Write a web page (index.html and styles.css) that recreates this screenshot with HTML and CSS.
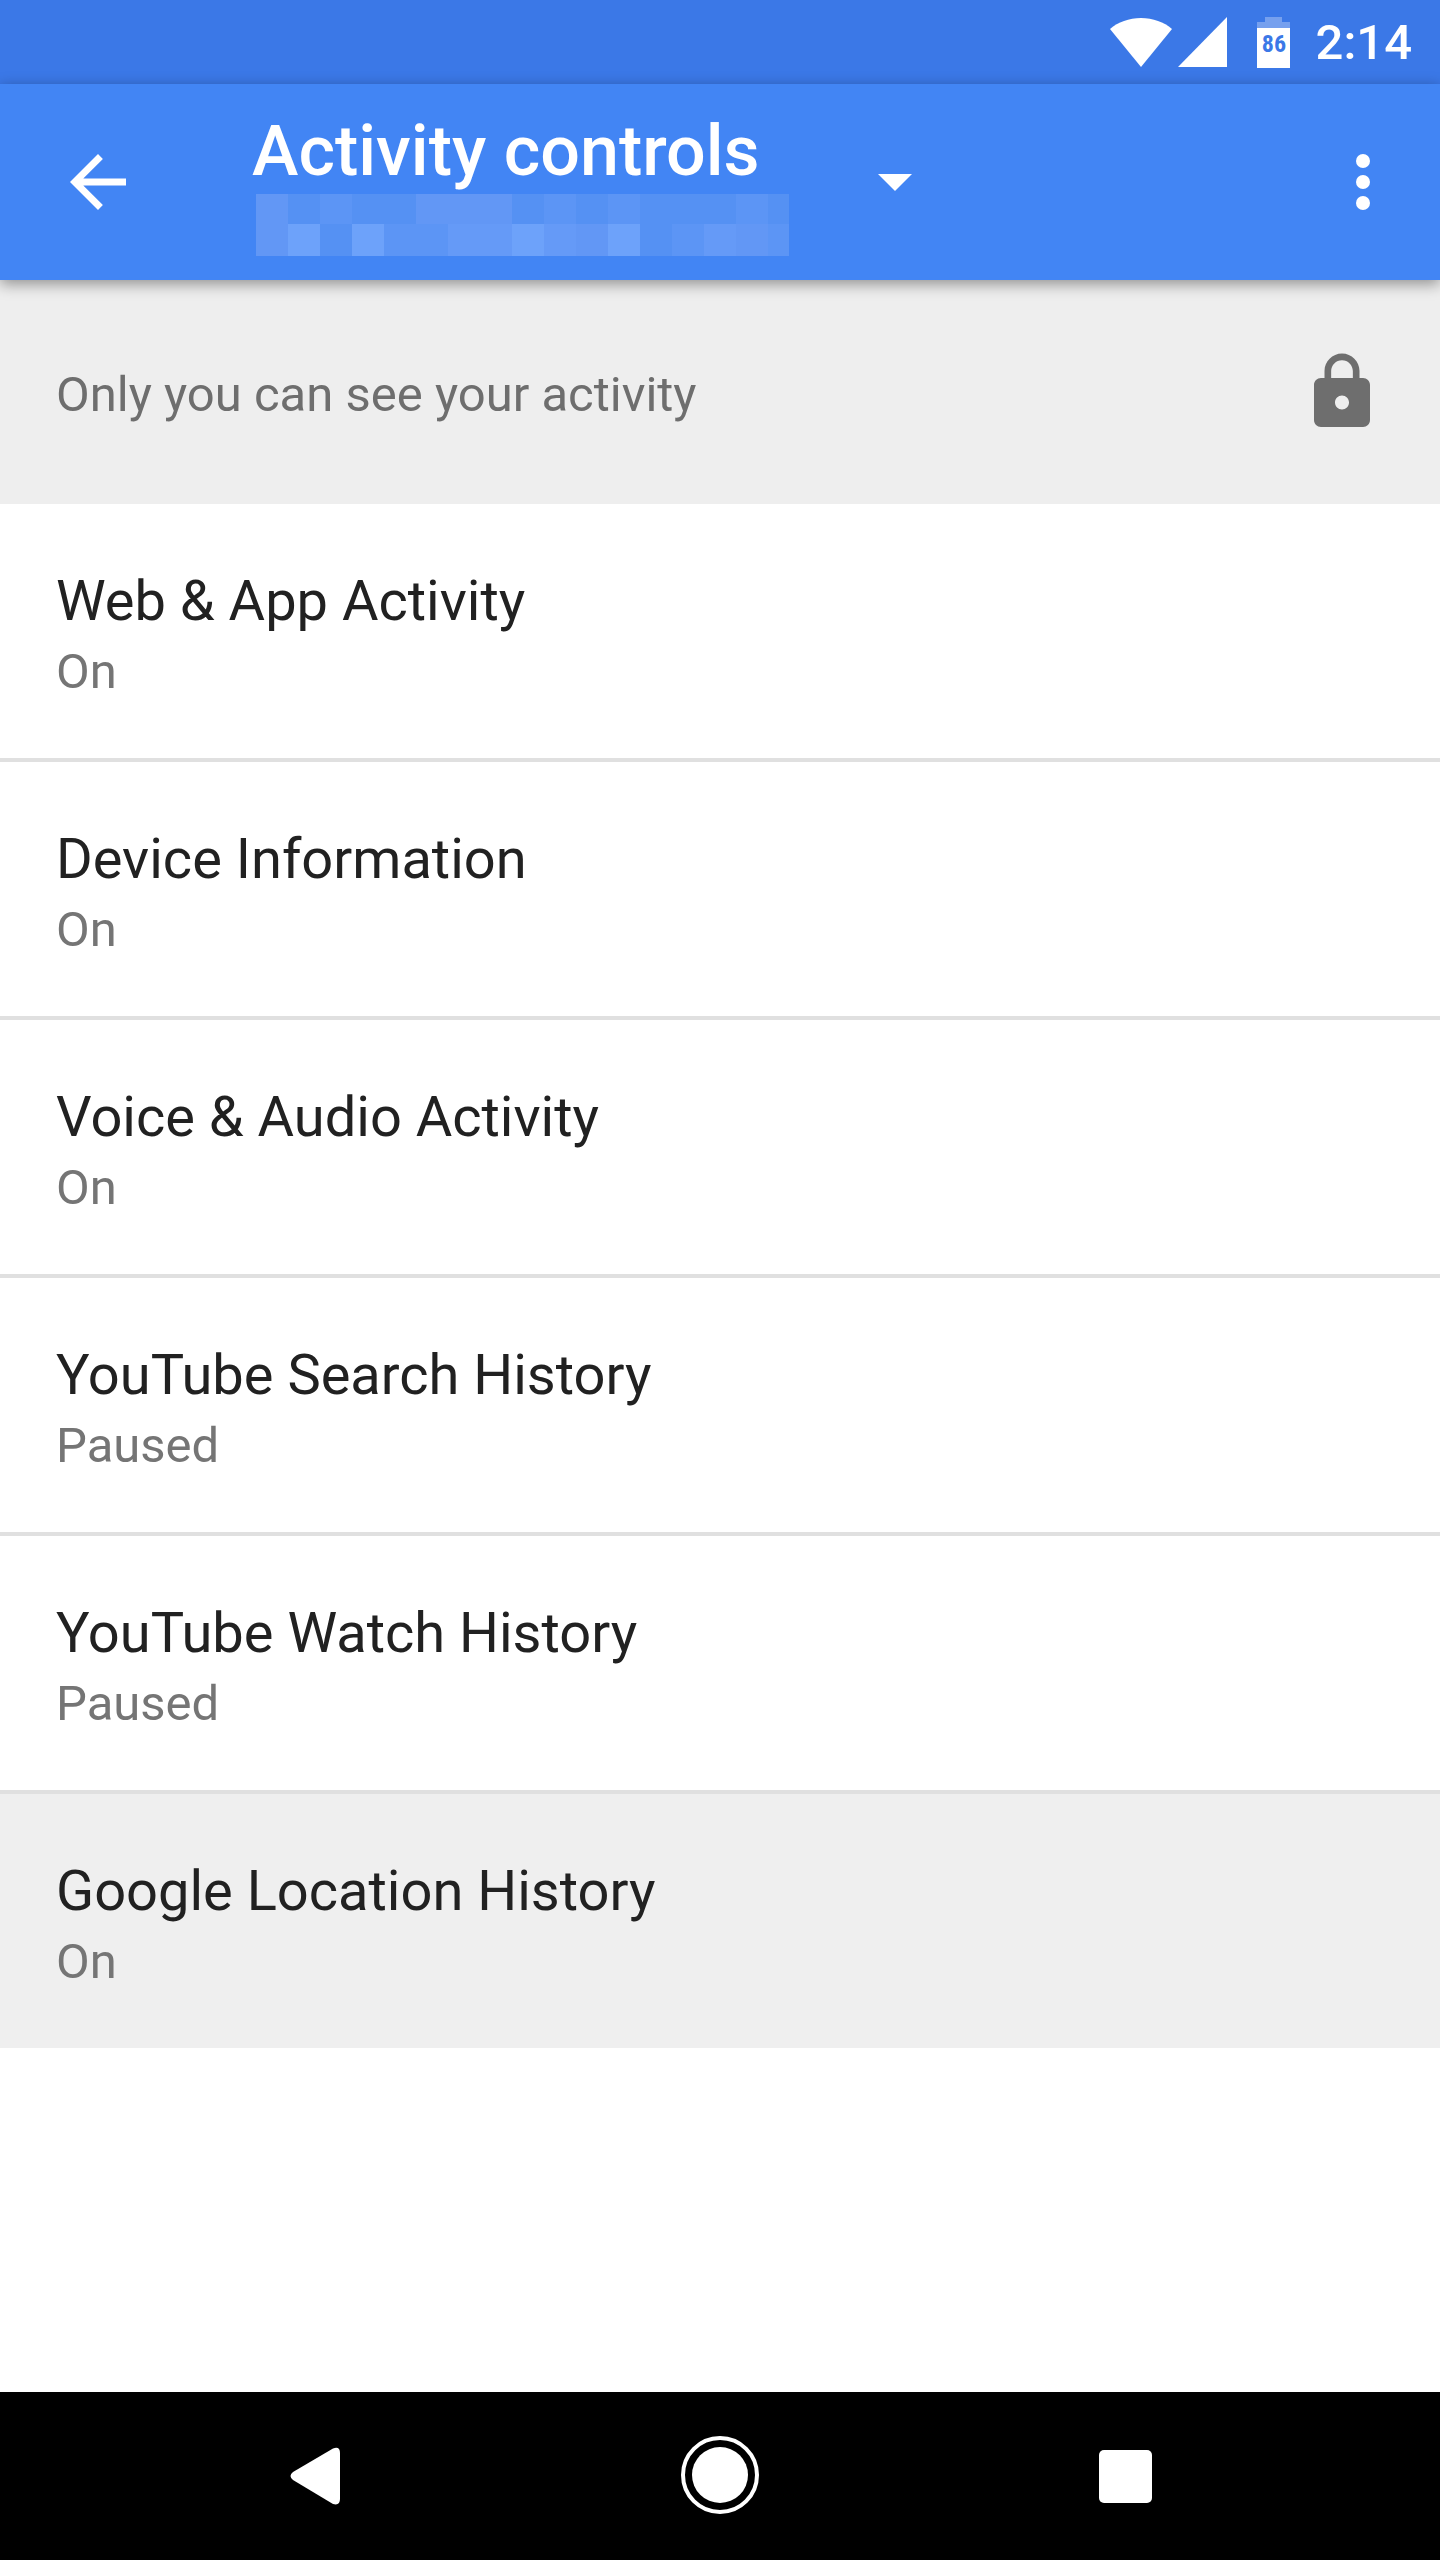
FILE: index.html
```html
<!DOCTYPE html>
<html lang="en">
<head>
    <meta charset="UTF-8">
    <meta name="viewport" content="width=device-width, initial-scale=1.0">
    <title>Activity controls</title>
    <link rel="stylesheet" href="styles.css">
</head>
<body>
    <div class="status-bar">
        <svg class="wifi" viewBox="0 0 62 50" width="62" height="50"><path d="M31 50L0 12C8 5 19 1 31 1s23 4 31 11z"/></svg>
        <svg class="signal" viewBox="0 0 49 50" width="49" height="50"><path d="M49 0v50H0z"/></svg>
        <svg class="battery" viewBox="0 0 33 51" width="33" height="51">
            <path class="battery-empty" d="M8 0h17v5h8v6H0V5h8z"/>
            <path d="M0 11h33v40H0z"/>
            <text class="battery-level" x="17" y="35">86</text>
        </svg>
        <span class="clock">2:14</span>
    </div>

    <header class="app-bar">
        <button class="icon-button" aria-label="Back">
            <svg viewBox="0 0 24 24"><path d="M20 11H7.8l5.6-5.6L12 4l-8 8 8 8 1.4-1.4L7.8 13H20z"/></svg>
        </button>
        <button class="account-menu" aria-label="Activity controls, choose account">
            <span class="account-text">
                <span class="app-title">Activity controls</span>
                <svg class="account-mask" viewBox="0 0 533 62" width="533" height="62" shape-rendering="crispEdges">
                    <path fill="#5591f3" d="M0 0h533v62H0z"/>
                    <path fill="#5c95f5" d="M64 0h32v30H64zM288 0h32v30h-32zM352 0h32v30h-32zM480 0h32v30h-32zM128 30h64v32h-64zM416 30h32v32h-32zM512 30h21v32h-21z"/>
                    <path fill="#6297f5" d="M0 0h32v62H0zM160 0h96v30h-96zM320 30h32v32h-32zM480 30h32v32h-32z"/>
                    <path fill="#659af7" d="M192 30h64v32h-64zM288 30h32v32h-32zM448 30h32v32h-32z"/>
                    <path fill="#6da2fa" d="M32 30h32v32H32zM96 30h32v32H96zM256 30h32v32h-32zM352 30h32v32h-32z"/>
                </svg>
            </span>
            <svg class="caret" viewBox="0 0 34 17" width="34" height="17"><path d="M0 0h34L17 17z"/></svg>
        </button>
        <button class="icon-button" aria-label="More options">
            <svg viewBox="0 0 24 24"><circle cx="12" cy="6" r="2"/><circle cx="12" cy="12" r="2"/><circle cx="12" cy="18" r="2"/></svg>
        </button>
    </header>

    <main class="content">
        <div class="notice">
            <span class="notice-text">Only you can see your activity</span>
            <svg class="lock" viewBox="0 0 24 24"><path d="M18 8h-1V6c0-2.76-2.24-5-5-5S7 3.24 7 6v2H6c-1.1 0-2 .9-2 2v10c0 1.1.9 2 2 2h12c1.1 0 2-.9 2-2V10c0-1.1-.9-2-2-2zm-6 9c-1.1 0-2-.9-2-2s.9-2 2-2 2 .9 2 2-.9 2-2 2zm3.1-9H8.9V6c0-1.71 1.39-3.1 3.1-3.1s3.1 1.39 3.1 3.1v2z"/></svg>
        </div>
        <nav class="controls">
            <a class="control" href="#web">
                <span class="control-name">Web &amp; App Activity</span>
                <span class="control-state">On</span>
            </a>
            <a class="control" href="#device">
                <span class="control-name">Device Information</span>
                <span class="control-state">On</span>
            </a>
            <a class="control" href="#voice">
                <span class="control-name">Voice &amp; Audio Activity</span>
                <span class="control-state">On</span>
            </a>
            <a class="control" href="#youtube-search">
                <span class="control-name">YouTube Search History</span>
                <span class="control-state">Paused</span>
            </a>
            <a class="control" href="#youtube-watch">
                <span class="control-name">YouTube Watch History</span>
                <span class="control-state">Paused</span>
            </a>
            <a class="control pressed" href="#location">
                <span class="control-name">Google Location History</span>
                <span class="control-state">On</span>
            </a>
        </nav>
    </main>

    <footer class="nav-bar">
        <button class="nav-button" aria-label="Back">
            <svg viewBox="0 0 80 80"><path d="M18 36L58 12.500Q65 10 65 17V63Q65 70 58 68L18 44Q13 40 18 36z"/></svg>
        </button>
        <button class="nav-button" aria-label="Home">
            <svg viewBox="0 0 80 80"><circle class="ring" cx="40" cy="39" r="37"/><circle cx="40" cy="39" r="28"/></svg>
        </button>
        <button class="nav-button" aria-label="Recent apps">
            <svg viewBox="0 0 80 80"><rect x="14" y="14" width="53" height="53" rx="5"/></svg>
        </button>
    </footer>
</body>
</html>
```

FILE: styles.css
```css
* {
    box-sizing: border-box;
}
body {
    display: flex;
    flex-direction: column;
    min-height: 100vh;
    margin: 0;
    background-color: white;
    font-family: Roboto, "Liberation Sans", sans-serif;
    font-size: 49px;
}
button {
    padding: 0;
    border: none;
    background: none;
    color: inherit;
    font: inherit;
    text-align: left;
    cursor: pointer;
}
svg {
    display: block;
    flex: none;
    fill: currentColor;
}

/* status bar */
.status-bar {
    display: flex;
    align-items: center;
    justify-content: flex-end;
    height: 84px;
    padding-right: 28px;
    background-color: #3b78e7;
    color: white;
}
.signal {
    margin-left: 6px;
}
.battery {
    margin-left: 30px;
}
.battery-empty {
    opacity: 0.3;
}
.battery-level {
    fill: #3b78e7;
    font-family: "Roboto Condensed", Roboto, sans-serif;
    font-size: 24px;
    font-weight: bold;
    text-anchor: middle;
}
.clock {
    margin-left: 26px;
    font-weight: 500;
}

/* app bar */
.app-bar {
    position: relative;
    display: flex;
    align-items: center;
    height: 196px;
    padding: 0 35px 0 56px;
    background-color: #4285f4;
    color: white;
    box-shadow: 0 4px 14px rgba(0, 0, 0, 0.4);
}
.icon-button svg,
.lock {
    width: 84px;
    height: 84px;
}
.account-menu {
    display: flex;
    align-items: center;
    gap: 89px;
    margin-left: 112px;
    margin-right: auto;
}
.account-text {
    display: flex;
    flex-direction: column;
}
.app-title {
    font-size: 70px;
    font-weight: 500;
    line-height: 86px;
}
.account-mask {
    margin-left: 4px;
}

/* list */
.content {
    flex: 1;
}
.notice {
    display: flex;
    align-items: center;
    justify-content: space-between;
    height: 224px;
    padding: 0 56px;
    background-color: #eeeeee;
    color: #6e6e6e;
}
.notice-text {
    padding-top: 4px;
}
.control {
    display: flex;
    flex-direction: column;
    padding: 62px 56px 50px;
    border-bottom: 4px solid #e0e0e0;
    color: #212121;
    line-height: 70px;
    text-decoration: none;
}
.control:last-child {
    border-bottom: none;
}
.control.pressed {
    background-color: #efefef;
}
.control-name {
    font-size: 56px;
}
.control-state {
    color: #757575;
    line-height: 72px;
}

/* navigation bar */
.nav-bar {
    display: grid;
    grid-template-columns: repeat(3, 1fr);
    height: 168px;
    padding: 0 112px;
    background-color: black;
    color: white;
}
.nav-button {
    display: flex;
    align-items: center;
    justify-content: center;
}
.nav-button svg {
    width: 80px;
    height: 80px;
}
.ring {
    fill: none;
    stroke: currentColor;
    stroke-width: 4;
}
```
